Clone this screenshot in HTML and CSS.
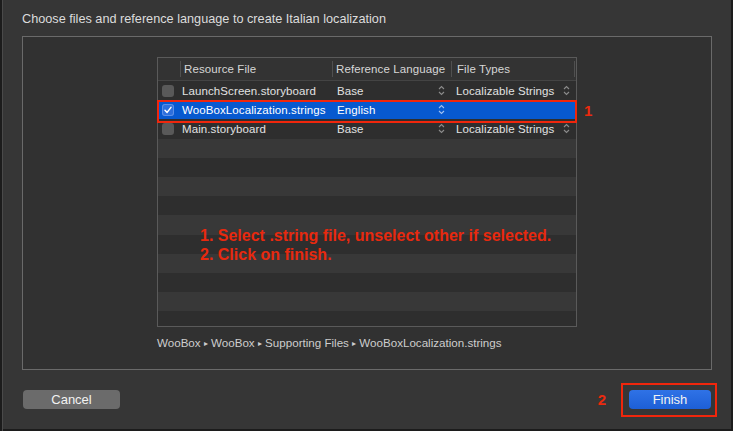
FILE: index.html
```html
<!DOCTYPE html>
<html lang="en">

<head>
    <meta charset="UTF-8">
    <meta name="viewport" content="width=device-width, initial-scale=1.0">
    <title>Localization</title>
    <link rel="stylesheet" href="styles.css">
</head>

<body>
    <div class="window">
        <!-- title -->
        <div class="title">Choose files and reference language to create Italian localization</div>

        <!-- panel -->
        <div class="panel">
            <div class="table_wrap">
                <div class="table">
                    <div class="row head">
                        <div class="cell"></div>
                        <div class="cell">Resource File</div>
                        <div class="cell">Reference Language</div>
                        <div class="cell last">File Types</div>
                    </div>
                    <div class="row odd">
                        <div class="cell"><span class="check"></span></div>
                        <div class="cell name">LaunchScreen.storyboard</div>
                        <div class="cell pop">Base
                            <svg class="arrows" viewBox="0 0 7 11"><path d="M1 4 L3.5 1.5 L6 4 M1 7 L3.5 9.5 L6 7"/></svg>
                        </div>
                        <div class="cell pop">Localizable Strings
                            <svg class="arrows" viewBox="0 0 7 11"><path d="M1 4 L3.5 1.5 L6 4 M1 7 L3.5 9.5 L6 7"/></svg>
                        </div>
                    </div>
                    <div class="row selected">
                        <div class="cell"><span class="check on">
                            <svg viewBox="0 0 12 12"><path d="M3 6.2 L5.1 8.4 L9 3.4"/></svg>
                        </span></div>
                        <div class="cell name">WooBoxLocalization.strings</div>
                        <div class="cell pop">English
                            <svg class="arrows" viewBox="0 0 7 11"><path d="M1 4 L3.5 1.5 L6 4 M1 7 L3.5 9.5 L6 7"/></svg>
                        </div>
                        <div class="cell"></div>
                    </div>
                    <div class="row odd">
                        <div class="cell"><span class="check"></span></div>
                        <div class="cell name">Main.storyboard</div>
                        <div class="cell pop">Base
                            <svg class="arrows" viewBox="0 0 7 11"><path d="M1 4 L3.5 1.5 L6 4 M1 7 L3.5 9.5 L6 7"/></svg>
                        </div>
                        <div class="cell pop">Localizable Strings
                            <svg class="arrows" viewBox="0 0 7 11"><path d="M1 4 L3.5 1.5 L6 4 M1 7 L3.5 9.5 L6 7"/></svg>
                        </div>
                    </div>
                    <div class="row"></div>
                    <div class="row odd"></div>
                    <div class="row"></div>
                    <div class="row odd"></div>
                    <div class="row"></div>
                    <div class="row odd"></div>
                    <div class="row"></div>
                    <div class="row odd"></div>
                    <div class="row"></div>
                    <div class="row odd"></div>
                </div>

                <!-- annotations -->
                <div class="mark_row"></div>
                <span class="step step_one">1</span>
                <div class="note">
                    1. Select .string file, unselect other if selected.<br>
                    2. Click on finish.
                </div>
            </div>

            <div class="path">
                WooBox <span class="sep">&#9656;</span> WooBox <span class="sep">&#9656;</span> Supporting Files <span class="sep">&#9656;</span> WooBoxLocalization.strings
            </div>
        </div>

        <!-- footer -->
        <div class="footer">
            <button class="btn cancel">Cancel</button>
            <div class="finish_wrap">
                <span class="step">2</span>
                <div class="mark_btn">
                    <button class="btn finish">Finish</button>
                </div>
            </div>
        </div>
    </div>
</body>

</html>
```

FILE: styles.css
```css
* {
    box-sizing: border-box;
}

body {
    margin: 0;
    background: #363636;
    font-family: "Liberation Sans", Arial, sans-serif;
}

.window {
    width: 733px;
    height: 431px;
    background: #363636;
    display: flex;
    flex-direction: column;
    box-shadow: inset 2px 0 #1c1c1c, inset 3px 0 #4a4a4a, inset -2px 0 #1c1c1c, inset 0 -2px #1c1c1c;
}

.title {
    height: 36px;
    padding: 11px 0 0 22px;
    font-size: 12.7px;
    line-height: 16px;
    color: #dcdcdc;
}

.panel {
    margin-left: 22px;
    width: 690px;
    height: 334px;
    border: 1px solid #6a6a6a;
    background: #313131;
}

.table_wrap {
    position: relative;
    margin: 20px 0 0 134px;
    width: 420px;
}

.table {
    width: 420px;
    height: 270px;
    border: 1px solid #5a5a5a;
    overflow: hidden;
    background: #2e2e2e;
}

.row {
    display: grid;
    grid-template-columns: 22px 152px 119px 1fr;
    align-items: center;
    height: 19.2px;
    background: #383838;
    font-size: 11.5px;
    letter-spacing: 0.1px;
    color: #e2e2e2;
}

.row.odd {
    background: #2e2e2e;
}

.row.head {
    height: 23px;
    background: #333333;
    border-bottom: 1px solid #444;
    color: #d6d6d6;
}

.head .cell {
    height: 16px;
    line-height: 16px;
    padding-left: 3px;
    border-left: 1px solid #505050;
}

.head .cell:first-child {
    border-left: none;
}

.head .cell.last {
    padding-left: 5px;
    margin-right: 1px;
    border-right: 1px solid #505050;
}

.row.selected {
    background: #0759cf;
    color: #ffffff;
}

.cell {
    display: flex;
    align-items: center;
    white-space: nowrap;
}

.cell.name {
    padding-left: 2px;
}

.cell.pop {
    justify-content: space-between;
    padding: 0 6px 0 5px;
}

.arrows {
    width: 7px;
    height: 11px;
    fill: none;
    stroke: #8c8c8c;
    stroke-width: 1.1;
}

.selected .arrows {
    stroke: #9fc0f2;
}

.check {
    display: block;
    width: 12px;
    height: 12px;
    margin-left: 4px;
    border-radius: 3px;
    background: #595959;
}

.check.on {
    background: #2e6fdb;
    box-shadow: inset 0 0 0 1px #5c8fe6;
}

.check svg {
    display: block;
    width: 12px;
    height: 12px;
    fill: none;
    stroke: #ffffff;
    stroke-width: 1.5;
    stroke-linecap: round;
    stroke-linejoin: round;
}

.mark_row {
    position: absolute;
    left: 0;
    top: 43px;
    width: 420px;
    height: 23px;
    border: 2px solid #f0260c;
}

.step {
    font-size: 15px;
    font-weight: bold;
    color: #ec2a0e;
}

.step_one {
    position: absolute;
    left: 427px;
    top: 45px;
}

.note {
    position: absolute;
    left: 43px;
    top: 169px;
    font-size: 16px;
    line-height: 19px;
    font-weight: bold;
    color: #e8290e;
    white-space: nowrap;
}

.path {
    margin: 9px 0 0 134px;
    font-size: 11.6px;
    line-height: 13px;
    color: #cdcdcd;
}

.sep {
    font-size: 8px;
    vertical-align: 1px;
}

.footer {
    flex: 1;
    display: flex;
    align-items: center;
    justify-content: space-between;
    padding: 0 16px 2px 23px;
}

.btn {
    height: 19px;
    border: none;
    border-radius: 4px;
    font-family: "Liberation Sans", Arial, sans-serif;
    font-size: 13px;
    color: #f2f2f2;
    padding: 0;
}

.cancel {
    width: 97px;
    background: #6b6b6b;
}

.finish_wrap {
    display: flex;
    align-items: center;
    gap: 15px;
}

.mark_btn {
    border: 2px solid #f0260c;
    padding: 5px 4px 6px 6px;
}

.finish {
    display: block;
    width: 82px;
    background: linear-gradient(#2f72e6, #1d5fd6);
}
```
